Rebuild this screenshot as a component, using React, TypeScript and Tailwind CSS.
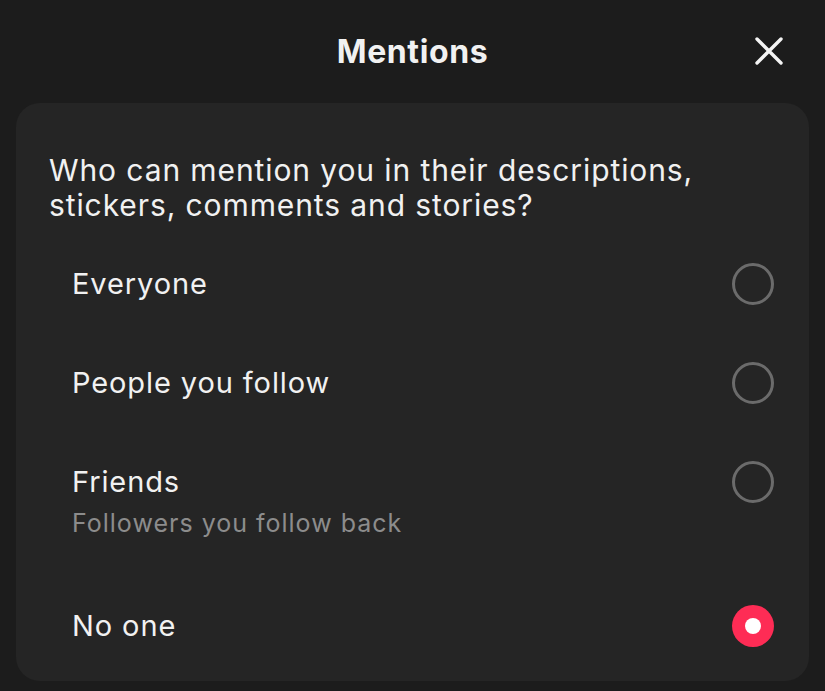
import React from 'react'

type Option = {
  label: string
  hint?: string
}

const options: Option[] = [
  { label: 'Everyone' },
  { label: 'People you follow' },
  { label: 'Friends', hint: 'Followers you follow back' },
  { label: 'No one' },
]

function Radio({ checked }: { checked: boolean }) {
  if (checked) {
    return (
      <span className="flex h-[42px] w-[42px] shrink-0 items-center justify-center rounded-full bg-[#fe2c55]">
        <span className="h-[16px] w-[16px] rounded-full bg-white" />
      </span>
    )
  }
  return <span className="block h-[42px] w-[42px] shrink-0 rounded-full border-[3px] border-[#6b6b6b]" />
}

export default function App() {
  const selected = 3

  return (
    <div
      className="flex h-[691px] w-[825px] flex-col overflow-hidden bg-[#1c1c1c] text-[#f1f1f1]"
      style={{ fontFamily: 'Inter, "Noto Sans", sans-serif' }}
    >
      {/* header */}
      <div className="relative flex h-[103px] shrink-0 items-center justify-center">
        <h1 className="text-[32px] font-bold leading-none tracking-[0.6px]">Mentions</h1>
        <button type="button" className="absolute top-[37px] right-[42px] h-[28px] w-[28px]">
          <svg viewBox="0 0 28 28" className="h-[28px] w-[28px]" fill="none" stroke="#f4f4f4" strokeWidth={3.4} strokeLinecap="round">
            <path d="M2 2 L26 26 M26 2 L2 26" />
          </svg>
        </button>
      </div>

      {/* card */}
      <div className="mx-[16px] flex-1 rounded-[24px] bg-[#252525] pt-[50px] pr-[35px] pl-[33px]">
        <p className="text-[30px] leading-[35px] tracking-[0.9px]">
          Who can mention you in their descriptions,
          <br />
          stickers, comments and stories?
        </p>

        <div className="mt-[11px] flex flex-col">
          {options.map((opt, i) => (
            <div
              key={opt.label}
              className={
                opt.hint
                  ? 'flex items-start justify-between pt-[31.5px] pb-[37.5px] pl-[23px]'
                  : 'flex items-start justify-between py-[31.5px] pl-[23px]'
              }
            >
              <div className="flex flex-col">
                <span className="text-[29px] leading-[36px] tracking-[0.9px]">{opt.label}</span>
                {opt.hint && (
                  <span className="mt-[7px] text-[25px] leading-[32px] tracking-[1px] text-[#8c8c8c]">{opt.hint}</span>
                )}
              </div>
              <div className="flex h-[36px] items-center">
                <Radio checked={i === selected} />
              </div>
            </div>
          ))}
        </div>
      </div>
      <div className="h-[10px] shrink-0" />
    </div>
  )
}
